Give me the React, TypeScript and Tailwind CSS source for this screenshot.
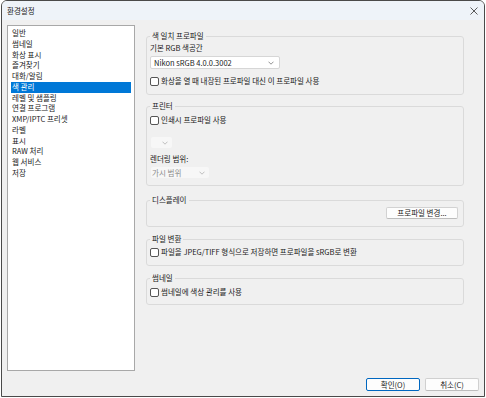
import React from "react";

const items = [
  "일반",
  "썸네일",
  "화상 표시",
  "즐겨찾기",
  "대화/알림",
  "색 관리",
  "레벨 및 샘플링",
  "연결 프로그램",
  "XMP/IPTC 프리셋",
  "라벨",
  "표시",
  "RAW 처리",
  "웹 서비스",
  "저장",
];

const Chevron = ({ color }: { color: string }) => (
  <svg width="6" height="4" viewBox="0 0 6 4" className="shrink-0">
    <path d="M0.5 0.7 L3 3.2 L5.5 0.7" fill="none" stroke={color} strokeWidth="0.8" />
  </svg>
);

const Check = ({ label, className = "" }: { label: string; className?: string }) => (
  <div className={`flex items-center h-[12px] ${className}`}>
    <span className="w-[9px] h-[9px] border border-[#555] rounded-[2px] bg-white mr-[2px] shrink-0" />
    <span>{label}</span>
  </div>
);

const Group = ({
  title,
  className = "",
  children,
}: {
  title: string;
  className?: string;
  children: React.ReactNode;
}) => (
  <fieldset className={`border border-[#dadada] rounded-[3px] px-[3px] ${className}`}>
    <legend className="px-[2px] leading-[10px] text-[#1a1a1a]">{title}</legend>
    {children}
  </fieldset>
);

const App = () => {
  return (
    <div className="w-[486px] h-[398px] bg-white font-['Noto_Sans_CJK_KR',sans-serif] text-[7.5px] text-[#1a1a1a]">
      <div className="ml-px w-[484px] h-[397px] border border-[#4a4a4a] rounded-t-[6px] bg-[#f0f0f0] flex flex-col overflow-hidden">
        {/* title bar */}
        <div className="h-[19px] bg-[#eef3f9] flex items-center justify-between pl-[5px] pr-[5px] shrink-0">
          <span className="text-[7.5px] leading-[10px]">환경설정</span>
          <svg width="8" height="8" viewBox="0 0 8 8" className="mr-[1px]">
            <path d="M0.5 0.5 L7.5 7.5 M7.5 0.5 L0.5 7.5" stroke="#333" strokeWidth="0.8" />
          </svg>
        </div>

        <div className="flex flex-col pl-[5px] pt-[5px]">
          <div className="flex">
            {/* left list */}
            <div className="w-[128px] h-[346px] bg-white border border-[#a8a8a8] px-[3px] pt-[2px] shrink-0">
              {items.map((it) =>
                it === "색 관리" ? (
                  <div key={it} className="leading-[10.75px] pl-px bg-[#0078d7] text-white">
                    {it}
                  </div>
                ) : (
                  <div key={it} className="leading-[10.75px] pl-px">
                    {it}
                  </div>
                )
              )}
            </div>

            {/* right panel */}
            <div className="ml-[11px] w-[318px] flex flex-col">
              <Group title="색 일치 프로파일" className="mt-[6px] pb-[7px]">
                <div className="leading-[14px]">기본 RGB 색공간</div>
                <div className="mt-[1px] w-[130px] h-[13px] bg-white border border-[#d6d6d6] rounded-[2px] flex items-center justify-between pl-[3px] pr-[5px]">
                  <span>Nikon sRGB 4.0.0.3002</span>
                  <Chevron color="#777" />
                </div>
                <Check className="mt-[6px]" label="화상을 열 때 내장된 프로파일 대신 이 프로파일 사용" />
              </Group>

              <Group title="프린터" className="mt-[6px] pb-[7px]">
                <Check className="mt-[3px]" label="인쇄시 프로파일 사용" />
                <div className="mt-[11px] ml-px w-[21px] h-[11px] bg-[#f7f7f7] rounded-[2px] flex items-center justify-end pr-[4px]">
                  <Chevron color="#b0b0b0" />
                </div>
                <div className="mt-[5px] leading-[12px]">렌더링 범위:</div>
                <div className="mt-[2px] ml-px w-[58px] h-[11px] bg-[#f7f7f7] rounded-[2px] flex items-center justify-between pl-[1px] pr-[4px] text-[#8c8c8c]">
                  <span>가시 범위</span>
                  <Chevron color="#b0b0b0" />
                </div>
              </Group>

              <Group title="디스플레이" className="mt-[9px] pb-[7px]">
                <div className="flex justify-end pr-[2px]">
                  <button className="mt-[2px] w-[72px] h-[12px] bg-[#fdfdfd] border border-[#d2d2d2] border-b-[#bdbdbd] rounded-[2px] flex items-center justify-center leading-[10px]">
                    프로파일 변경...
                  </button>
                </div>
              </Group>

              <Group title="파일 변환" className="mt-[7px] pb-[7px]">
                <Check className="mt-[2px]" label="파일을 JPEG/TIFF 형식으로 저장하면 프로파일을 sRGB로 변환" />
              </Group>

              <Group title="썸네일" className="mt-[7px] pb-[6px]">
                <Check className="mt-[3px]" label="썸네일에 색상 관리를 사용" />
              </Group>
            </div>
          </div>

          {/* bottom buttons */}
          <div className="flex justify-end gap-[5px] pr-[5px] mt-[7px]">
            <button className="w-[54px] h-[13px] bg-[#fdfdfd] border border-[#0067c0] rounded-[2px] flex items-center justify-center leading-[10px]">
              확인(O)
            </button>
            <button className="w-[54px] h-[13px] bg-[#fdfdfd] border border-[#d0d0d0] border-b-[#bdbdbd] rounded-[2px] flex items-center justify-center leading-[10px]">
              취소(C)
            </button>
          </div>
        </div>
      </div>
    </div>
  );
};

export default App;
